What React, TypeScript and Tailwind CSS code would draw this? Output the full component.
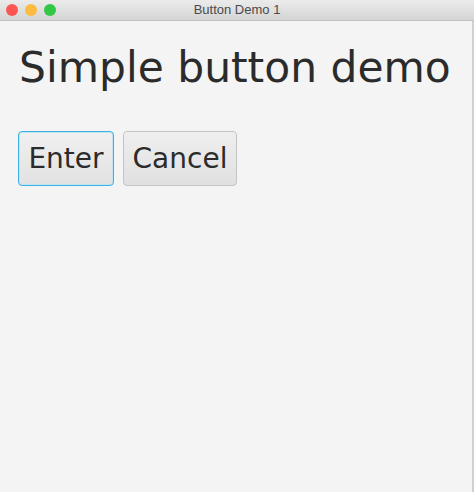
import React from "react";

export default function App() {
  return (
    <div className="w-[474px] h-[492px] bg-[#f4f4f4] flex flex-col overflow-hidden" style={{ fontFamily: '"DejaVu Sans", Verdana, sans-serif' }}>
      <div className="h-[21px] shrink-0 relative flex items-center justify-center bg-gradient-to-b from-[#ebebeb] to-[#d5d5d5] border-b border-[#c0c0c0]">
        <div className="absolute left-[6px] top-[4px] flex gap-[7px]">
          <div className="w-[12px] h-[12px] rounded-full bg-[#fc5753]" />
          <div className="w-[12px] h-[12px] rounded-full bg-[#fdbc40]" />
          <div className="w-[12px] h-[12px] rounded-full bg-[#33c748]" />
        </div>
        <span className="text-[13px] text-[#4a4a4a]" style={{ fontFamily: '"Liberation Sans", Arial, sans-serif' }}>Button Demo 1</span>
      </div>
      <div className="flex-1 flex border-r-2 border-[#d0d0d0]">
        <div className="flex-1 flex flex-col pl-[18px] pt-[23px]">
          <h1 className="text-[42.4px] leading-[48px] text-[#2b2b2b] whitespace-nowrap ml-[1px]">Simple button demo</h1>
          <div className="flex gap-[9px] mt-[39px]">
            <button className="w-[96px] h-[55px] rounded-[4px] border border-[#3fb0df] bg-gradient-to-b from-[#f0f0f0] to-[#e2e2e2] text-[28px] text-[#2b2b2b] shadow-[inset_0_0_0_1px_#bfe4f3]">Enter</button>
            <button className="w-[114px] h-[55px] rounded-[4px] border border-[#c4c4c4] bg-gradient-to-b from-[#efefef] to-[#e0e0e0] text-[28px] text-[#2b2b2b]">Cancel</button>
          </div>
        </div>
      </div>
    </div>
  );
}
